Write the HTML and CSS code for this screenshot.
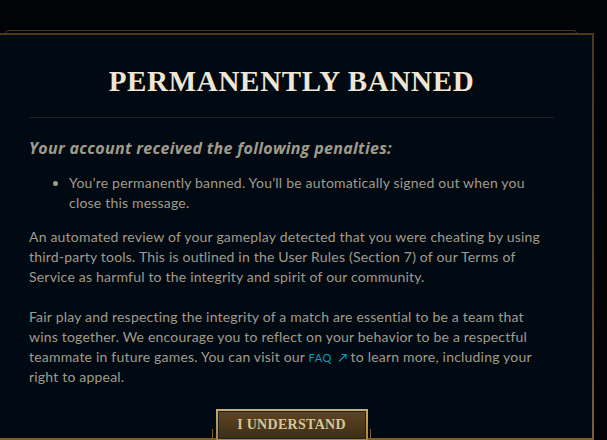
FILE: index.html
```html
<!DOCTYPE html>
<html lang="en">
<head>
<meta charset="utf-8">
<title>Permanently Banned</title>
<link rel="stylesheet" href="styles.css">
</head>
<body>
  <div class="modal">
    <svg class="frame-top" width="574" height="4" viewBox="0 0 574 4" aria-hidden="true">
      <polyline points="0.5,4 3.5,0.5 570.5,0.5 573.5,4" fill="none" stroke="#4a3a1a" stroke-width="1"/>
    </svg>
    <h1 class="title">PERMANENTLY BANNED</h1>
    <hr class="divider">
    <h2 class="subtitle">Your account received the following penalties:</h2>
    <ul class="penalties">
      <li>You’re permanently banned. You’ll be automatically signed out when you close this message.</li>
    </ul>
    <p class="para">An automated review of your gameplay detected that you were cheating by using third-party tools. This is outlined in the User Rules (Section 7) of our Terms of Service as harmful to the integrity and spirit of our community.</p>
    <p class="para para-gap"><span>Fair play and respecting the integrity of a match are essential to be a team that wins together. We encourage you to reflect on your behavior to be a respectful</span> <span>teammate in future games. You can visit our</span> <a class="faq" href="#"><span class="faq-label">FAQ</span><svg class="faq-arrow" width="9" height="9" viewBox="0 0 9 9" aria-hidden="true"><path d="M1 8.5 L8 1.5 M3.5 1.5 H8 V6" fill="none" stroke="currentColor" stroke-width="1.1"/></svg></a> <span>to learn more, including your</span> <span>right to appeal.</span></p>
    <div class="actions">
      <div class="button-frame">
        <button class="btn" type="button">I UNDERSTAND</button>
      </div>
    </div>
  </div>
</body>
</html>
```

FILE: styles.css
```css
html, body {
  margin: 0;
  padding: 0;
}
body {
  background: #010306;
  width: 607px;
  height: 440px;
  overflow: hidden;
  font-family: Lato, "Liberation Sans", sans-serif;
  color: #a09b8c;
}
.modal {
  position: relative;
  box-sizing: border-box;
  margin-top: 33px;
  margin-left: -11px;
  width: 605px;
  padding: 29px 38px 0;
  background: #010a13;
  border: 2px solid #4a3a1a;
  border-image: linear-gradient(to bottom, #4a3a1a 0%, #5c4624 60%, #7d5f2c 100%) 1;
}
.frame-top {
  position: absolute;
  top: -5px;
  left: 13px;
  display: block;
}
.title {
  margin: 0;
  font-family: "Liberation Serif", serif;
  font-weight: 700;
  font-size: 29px;
  line-height: 35px;
  letter-spacing: 0.7px;
  text-align: center;
  color: #f0e6d2;
}
.divider {
  margin: 18px 0 0;
  border: 0;
  height: 1px;
  background: #1e2328;
}
.subtitle {
  margin: 18px 0 0;
  font-family: "Open Sans", sans-serif;
  font-style: italic;
  font-weight: 700;
  font-size: 16px;
  line-height: 24px;
  letter-spacing: 0.3px;
  color: #a09b8c;
}
.penalties {
  margin: 13px 0 0;
  padding-left: 40px;
  font-size: 14px;
  line-height: 20px;
  letter-spacing: 0.2px;
}
.para {
  margin: 14px 0 0;
  font-size: 14px;
  line-height: 20px;
  letter-spacing: 0.2px;
}
.para-gap {
  margin-top: 20px;
}
.faq {
  display: inline-flex;
  align-items: center;
  gap: 6px;
  height: 20px;
  vertical-align: top;
  color: #0b9bb3;
  text-decoration: none;
}
.faq-label {
  font-size: 11px;
  line-height: 20px;
  letter-spacing: 0.5px;
  padding-top: 1px;
}
.faq-arrow {
  display: block;
  color: #0b9bb3;
}
.actions {
  display: flex;
  justify-content: center;
  margin-top: 22px;
  margin-bottom: -3px;
}
.button-frame {
  position: relative;
}
.button-frame::before,
.button-frame::after {
  content: "";
  position: absolute;
  bottom: 3px;
  width: 1px;
  height: 9px;
  background: #7d5f2c;
}
.button-frame::before { left: -4px; }
.button-frame::after { right: -3px; }
.btn {
  display: block;
  box-sizing: border-box;
  width: 152px;
  height: 32px;
  padding: 0;
  border: 2px solid #c8aa6e;
  border-image: linear-gradient(to bottom, #c8aa6e, #a8843f) 1;
  box-shadow: inset 0 0 0 1px #1e2328;
  background: linear-gradient(to bottom, #5e4523, #3d2d17);
  font-family: "Liberation Serif", serif;
  font-weight: 700;
  font-size: 14px;
  letter-spacing: 0.3px;
  color: #d6c69a;
  line-height: 28px;
}
```
